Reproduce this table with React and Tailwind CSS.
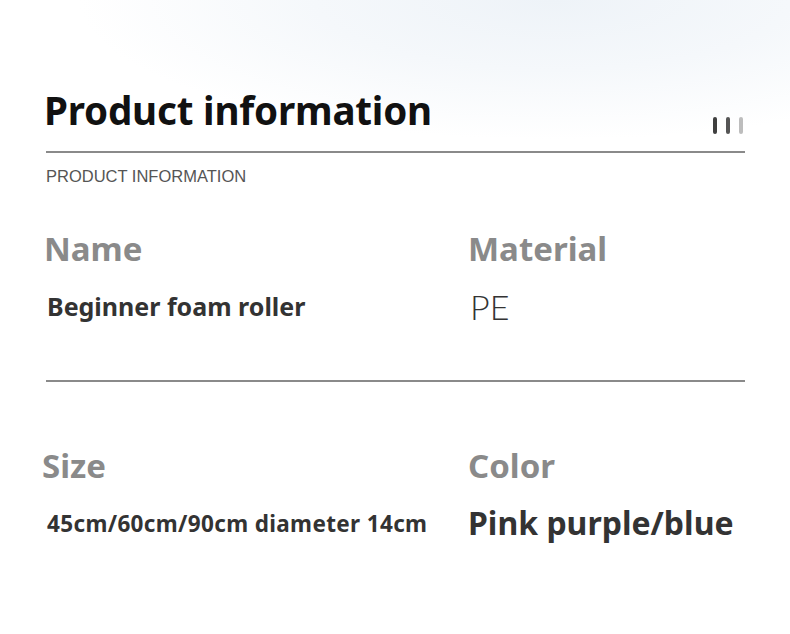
export default function App() {
  const sans = { fontFamily: '"Noto Sans", "Open Sans", sans-serif' };
  return (
    <div
      className="w-[790px] h-[634px] overflow-hidden bg-white bg-[radial-gradient(ellipse_60%_22%_at_70%_0%,#eef3f8_0%,#f5f8fb_50%,#ffffff_100%)]"
      style={sans}
    >
      <div className="pl-[44px] pr-[45px] pt-[86px]">
        <div className="flex items-end justify-between">
          <h1 className="text-[38.6px] font-bold leading-[48px] text-[#111] tracking-[-0.2px]">
            Product information
          </h1>
          <div className="flex gap-[9px] mb-[0px] mr-[2px]">
            <span className="w-[4px] h-[17px] rounded-full bg-[#3f3f3f]" />
            <span className="w-[4px] h-[17px] rounded-full bg-[#555555]" />
            <span className="w-[4px] h-[17px] rounded-full bg-[#bdbdbd]" />
          </div>
        </div>
        <div className="ml-[2px] mt-[17px] h-[2px] bg-[#8a8a8a]" />
        <div
          className="ml-[2px] mt-[13px] text-[16.5px] leading-[20px] text-[#555] font-light"
          style={{ fontFamily: '"Liberation Sans", Arial, sans-serif' }}
        >
          PRODUCT INFORMATION
        </div>

        <div className="grid grid-cols-[424px_1fr] mt-[43px]">
          <div className="text-[33px] font-bold leading-[40px] text-[#8a8a8a]">Name</div>
          <div className="text-[33px] font-bold leading-[40px] text-[#8a8a8a]">Material</div>
          <div className="pl-[3px] mt-[22px] text-[25px] font-bold leading-[30px] text-[#333]">
            Beginner foam roller
          </div>
          <div
            className="pl-[2px] mt-[22px] text-[34px] font-light leading-[32px] text-[#333]"
            style={{ fontFamily: 'Lato, "Liberation Sans", sans-serif', fontWeight: 300 }}
          >
            PE
          </div>
        </div>

        <div className="ml-[2px] mt-[57px] h-[2px] bg-[#8a8a8a]" />

        <div className="grid grid-cols-[424px_1fr] mt-[64px]">
          <div className="-ml-[2px] text-[33px] font-bold leading-[40px] text-[#8a8a8a]">Size</div>
          <div className="text-[33px] font-bold leading-[40px] text-[#8a8a8a]">Color</div>
          <div className="pl-[3px] mt-[23px] text-[22.5px] font-bold leading-[30px] text-[#333] tracking-[0.35px]">
            45cm/60cm/90cm diameter 14cm
          </div>
          <div className="pl-[0px] mt-[19px] text-[32px] font-bold leading-[36px] text-[#333]">
            Pink purple/blue
          </div>
        </div>
      </div>
    </div>
  );
}
